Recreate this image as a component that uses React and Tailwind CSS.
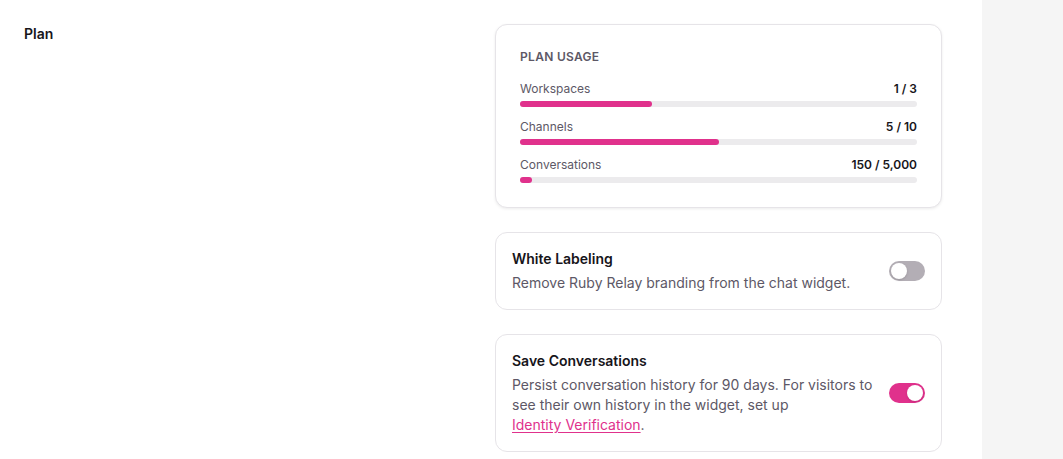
const USAGE = [
  { label: 'Workspaces', value: '1 / 3', pct: 33.3 },
  { label: 'Channels', value: '5 / 10', pct: 50 },
  { label: 'Conversations', value: '150 / 5,000', pct: 3 },
];

function Toggle({ on }) {
  return (
    <button
      type="button"
      className={[
        'relative flex h-5 w-9 shrink-0 items-center rounded-full px-0.5',
        on ? 'justify-end bg-[#e0318c]' : 'justify-start bg-[#b3aeb5]',
      ].join(' ')}
    >
      <span className="h-4 w-4 rounded-full bg-white shadow-sm" />
    </button>
  );
}

function SettingCard({ title, on, children }) {
  return (
    <div className="flex items-center gap-4 rounded-xl border border-[#e6e4e8] bg-white p-4">
      <div className="flex-1">
        <h4 className="text-sm leading-5 font-semibold text-[#17151a]">{title}</h4>
        <p className="mt-1 text-sm leading-5 text-[#5d5866]">{children}</p>
      </div>
      <Toggle on={on} />
    </div>
  );
}

export default function App() {
  return (
    <div className="flex min-h-[459px] bg-white font-['Inter',sans-serif]">
      <main className="flex flex-1 p-6 pr-10">
        <div className="flex-1">
          <h3 className="text-sm leading-5 font-semibold text-[#17151a]">Plan</h3>
        </div>
        <div className="flex w-[447px] flex-col gap-6">
          <div className="rounded-xl border border-[#e6e4e8] bg-white p-6 shadow-[0_1px_3px_rgba(0,0,0,0.08)]">
            <p className="mb-4 text-xs leading-4 font-semibold tracking-wide text-[#5d5866] uppercase">
              Plan Usage
            </p>
            <div className="flex flex-col gap-3">
              {USAGE.map((row) => (
                <div key={row.label}>
                  <div className="flex items-center justify-between text-xs leading-4">
                    <span className="text-[#5d5866]">{row.label}</span>
                    <span className="font-semibold text-[#17151a]">{row.value}</span>
                  </div>
                  <div className="mt-1 h-1.5 w-full rounded-full bg-[#ecebed]">
                    <div className="h-full rounded-full bg-[#e0318c]" style={{ width: `${row.pct}%` }} />
                  </div>
                </div>
              ))}
            </div>
          </div>

          <SettingCard title="White Labeling" on={false}>
            Remove Ruby Relay branding from the chat widget.
          </SettingCard>

          <SettingCard title="Save Conversations" on>
            Persist conversation history for 90 days. For visitors to see their own history in the widget, set up{' '}
            <a href="#" className="whitespace-nowrap text-[#e0318c] underline underline-offset-2">
              Identity Verification
            </a>
            .
          </SettingCard>
        </div>
      </main>
      <aside className="w-[81px] shrink-0 bg-[#f5f5f5]" />
    </div>
  );
}
